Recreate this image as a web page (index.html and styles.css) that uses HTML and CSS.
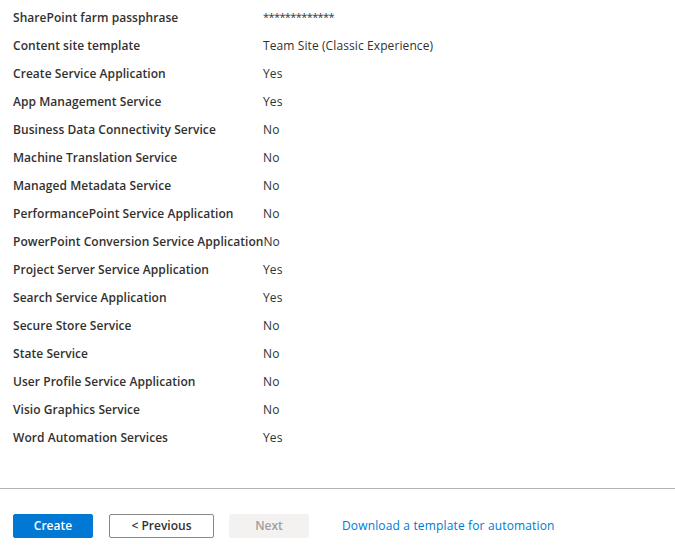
FILE: index.html
```html
<!DOCTYPE html>
<html lang="en">
<head>
<meta charset="utf-8">
<title>Review + create</title>
<link rel="stylesheet" href="styles.css">
</head>
<body>
<main class="page">
  <section class="summary">
    <div class="row"><div class="label">SharePoint farm passphrase</div><div class="value value-secret">*************</div></div>
    <div class="row"><div class="label">Content site template</div><div class="value">Team Site (Classic Experience)</div></div>
    <div class="row"><div class="label">Create Service Application</div><div class="value">Yes</div></div>
    <div class="row"><div class="label">App Management Service</div><div class="value">Yes</div></div>
    <div class="row"><div class="label">Business Data Connectivity Service</div><div class="value">No</div></div>
    <div class="row"><div class="label">Machine Translation Service</div><div class="value">No</div></div>
    <div class="row"><div class="label">Managed Metadata Service</div><div class="value">No</div></div>
    <div class="row"><div class="label">PerformancePoint Service Application</div><div class="value">No</div></div>
    <div class="row"><div class="label">PowerPoint Conversion Service Application</div><div class="value">No</div></div>
    <div class="row"><div class="label">Project Server Service Application</div><div class="value">Yes</div></div>
    <div class="row"><div class="label">Search Service Application</div><div class="value">Yes</div></div>
    <div class="row"><div class="label">Secure Store Service</div><div class="value">No</div></div>
    <div class="row"><div class="label">State Service</div><div class="value">No</div></div>
    <div class="row"><div class="label">User Profile Service Application</div><div class="value">No</div></div>
    <div class="row"><div class="label">Visio Graphics Service</div><div class="value">No</div></div>
    <div class="row"><div class="label">Word Automation Services</div><div class="value">Yes</div></div>
  </section>
  <footer class="footer">
    <button class="btn btn-primary">Create</button>
    <button class="btn btn-outline">&lt; Previous</button>
    <button class="btn btn-disabled" disabled>Next</button>
    <a class="link" href="#">Download a template for automation</a>
  </footer>
</main>
</body>
</html>
```
FILE: styles.css
```css
html, body {
  margin: 0;
  padding: 0;
  background: #ffffff;
}
body {
  font-family: "Open Sans", "Noto Sans", sans-serif;
  font-size: 12px;
  color: #323130;
}
.page {
  display: flex;
  flex-direction: column;
  width: 675px;
  height: 555px;
}
.summary {
  display: flex;
  flex-direction: column;
  padding: 3px 13px 0;
}
.row {
  display: flex;
  align-items: center;
  height: 28px;
}
.label {
  flex: 0 0 auto;
  min-width: 250px;
  font-weight: 600;
  white-space: nowrap;
  letter-spacing: 0.05px;
}
.value {
  white-space: nowrap;
  letter-spacing: 0.1px;
}
.value-secret {
  font-size: 11px;
  letter-spacing: -0.6px;
  padding-bottom: 2px;
}
.footer {
  margin-top: 37px;
  border-top: 1px solid #b3b3b3;
  padding: 25px 13px 0;
  display: flex;
  align-items: center;
}
.btn {
  font-family: inherit;
  font-size: 12px;
  font-weight: 600;
  height: 24px;
  box-sizing: border-box;
  border-radius: 2px;
  padding: 0 0 2px;
  margin: 0 16px 0 0;
  display: inline-flex;
  align-items: center;
  justify-content: center;
}
.btn-primary {
  width: 80px;
  background: #0078d4;
  border: 1px solid #0078d4;
  color: #ffffff;
}
.btn-outline {
  width: 105px;
  background: #ffffff;
  border: 1px solid #8a8886;
  color: #323130;
  margin-right: 15px;
}
.btn-disabled {
  width: 80px;
  background: #f3f2f1;
  border: 1px solid #f3f2f1;
  color: #a19f9d;
  margin-right: 33px;
}
.link {
  color: #0078d4;
  text-decoration: none;
  font-size: 12px;
  letter-spacing: 0.15px;
  padding-bottom: 2px;
}
```
